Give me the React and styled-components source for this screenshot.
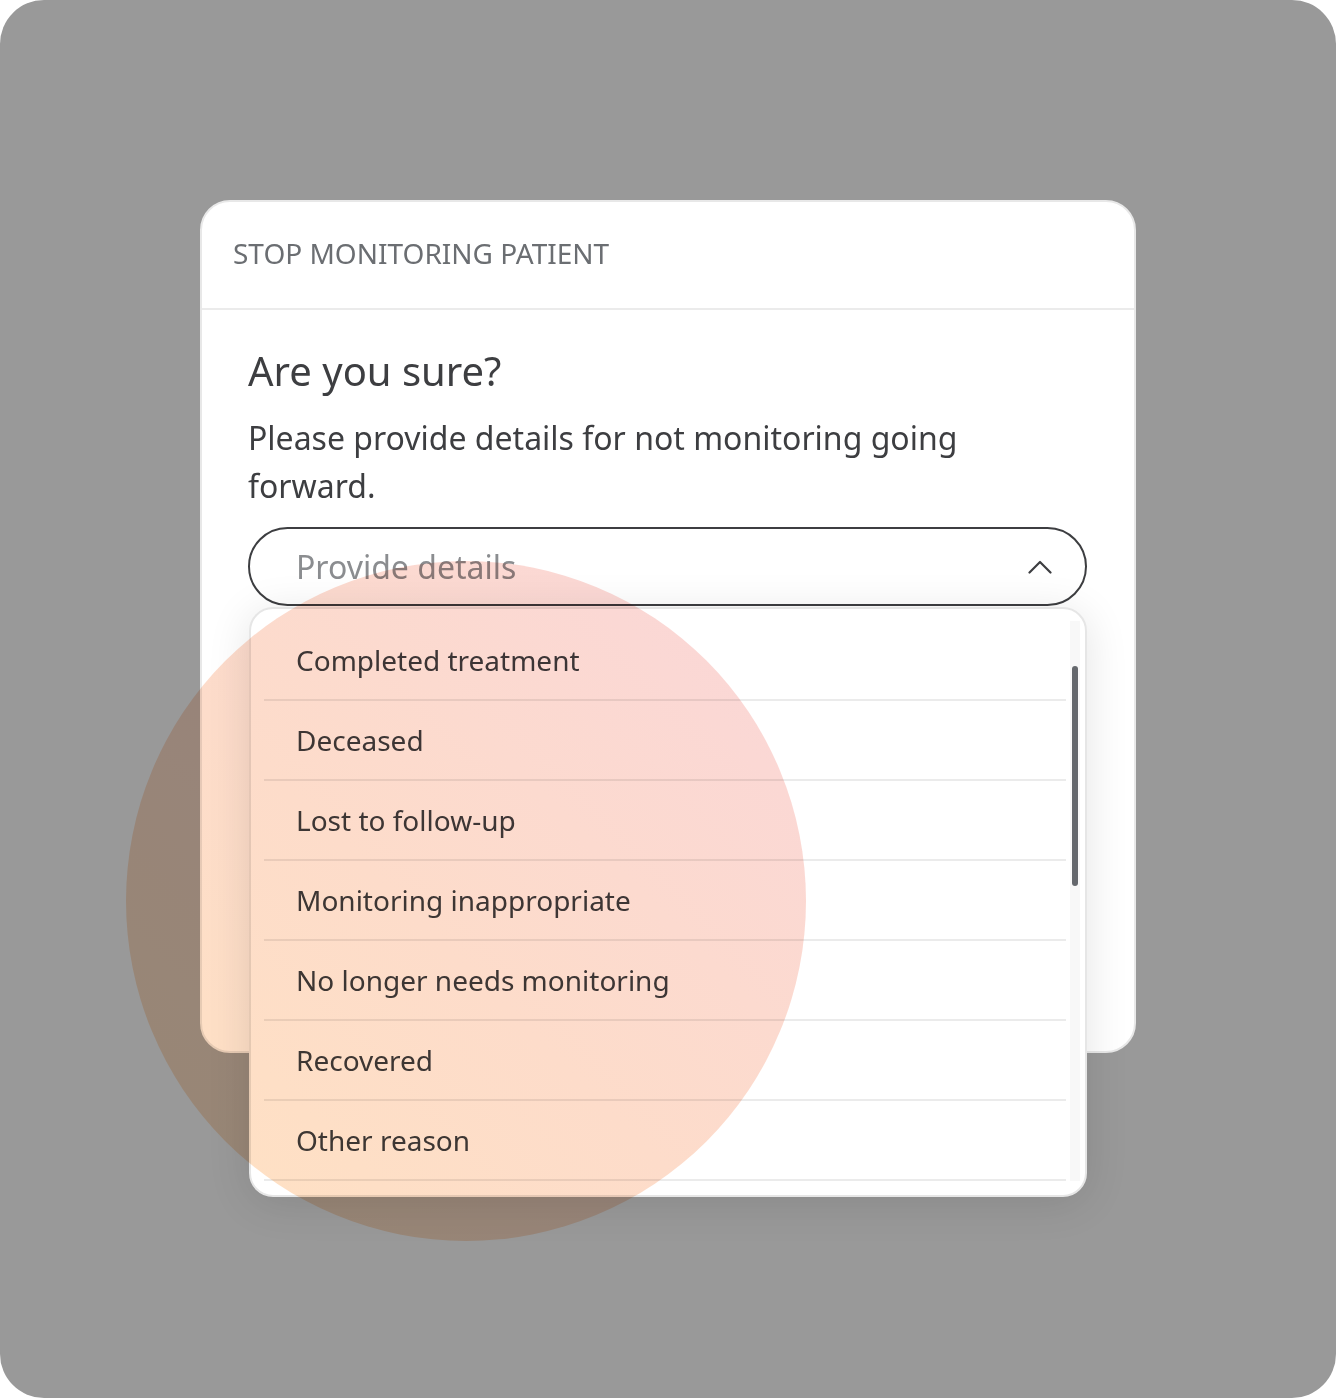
import React from "react";
import styled, { createGlobalStyle } from "styled-components";

const Global = createGlobalStyle`
  html, body { margin: 0; padding: 0; background: #ffffff; }
  body { font-family: "Noto Sans", "Open Sans", sans-serif; }
  * { box-sizing: border-box; }
`;

const Frame = styled.div`
  position: relative;
  width: 1336px;
  height: 1398px;
  background: #999999;
  border-radius: 44px;
  overflow: hidden;
  padding: 200px 0 0 200px;
`;

const Modal = styled.div`
  width: 936px;
  height: 853px;
  background: #ffffff;
  border: 2px solid #e8e8e8;
  border-radius: 30px;
  display: flex;
  flex-direction: column;
`;

const Header = styled.div`
  height: 108px;
  flex: none;
  display: flex;
  align-items: center;
  padding: 0 0 4px 31px;
  border-bottom: 2px solid #ebebeb;
`;

const HeaderTitle = styled.h2`
  margin: 0;
  font-weight: 400;
  font-size: 28px;
  color: #6b6e72;
`;

const Body = styled.div`
  padding: 37px 47px 0 46px;
  display: flex;
  flex-direction: column;
`;

const Title = styled.h1`
  margin: 0;
  font-weight: 400;
  font-size: 40px;
  line-height: 48px;
  color: #3d3e41;
`;

const Text = styled.p`
  margin: 19px 0 0;
  max-width: 800px;
  font-size: 32px;
  line-height: 48px;
  color: #3d3e41;
`;

const SelectWrap = styled.div`
  position: relative;
  margin-top: 17px;
`;

const SelectBox = styled.div`
  height: 79px;
  border: 2px solid #3d3e41;
  border-radius: 40px;
  display: flex;
  align-items: center;
  justify-content: space-between;
  padding: 0 33px 0 46px;
  background: #ffffff;
`;

const Placeholder = styled.span`
  font-size: 32px;
  color: #8b8d90;
`;

const Menu = styled.div`
  position: absolute;
  top: 80px;
  left: 1px;
  right: 0;
  background: #ffffff;
  border: 2px solid #e6e6e6;
  border-radius: 24px;
  box-shadow: 0 6px 44px rgba(0, 0, 0, 0.11);
  display: flex;
  padding: 12px 5px 14px 13px;
  z-index: 2;
`;

const List = styled.ul`
  list-style: none;
  margin: 0;
  padding: 0;
  flex: 1;
`;

const Item = styled.li`
  height: 80px;
  display: flex;
  align-items: center;
  padding-left: 32px;
  border-bottom: 2px solid #ebebeb;
  font-size: 28px;
  color: #3d3e41;
`;

const Track = styled.div`
  width: 10px;
  margin-left: 4px;
  background: #f8f8f8;
  padding-top: 45px;
  display: flex;
  justify-content: center;
`;

const Thumb = styled.div`
  width: 6px;
  height: 220px;
  border-radius: 3px;
  background: #65686d;
`;

const Blob = styled.div`
  position: absolute;
  left: 126px;
  top: 561px;
  width: 680px;
  height: 680px;
  border-radius: 50%;
  background: linear-gradient(45deg, #ffe2c2 0%, #fddcca 45%, #fad6d9 100%);
  mix-blend-mode: multiply;
  pointer-events: none;
  z-index: 5;
`;

const items = [
  "Completed treatment",
  "Deceased",
  "Lost to follow-up",
  "Monitoring inappropriate",
  "No longer needs monitoring",
  "Recovered",
  "Other reason",
];

const Chevron = () => (
  <svg width="24" height="14" viewBox="0 0 24 14" fill="none">
    <path d="M1.5 12.5 L12 2 L22.5 12.5" stroke="#3d3e41" strokeWidth="2.2" strokeLinecap="round" strokeLinejoin="round" />
  </svg>
);

export default function App() {
  return (
    <>
      <Global />
      <Frame>
        <Modal>
          <Header>
            <HeaderTitle>STOP MONITORING PATIENT</HeaderTitle>
          </Header>
          <Body>
            <Title>Are you sure?</Title>
            <Text>Please provide details for not monitoring going forward.</Text>
            <SelectWrap>
              <SelectBox>
                <Placeholder>Provide details</Placeholder>
                <Chevron />
              </SelectBox>
              <Menu>
                <List>
                  {items.map((t) => (
                    <Item key={t}>{t}</Item>
                  ))}
                </List>
                <Track>
                  <Thumb />
                </Track>
              </Menu>
            </SelectWrap>
          </Body>
        </Modal>
        <Blob />
      </Frame>
    </>
  );
}
